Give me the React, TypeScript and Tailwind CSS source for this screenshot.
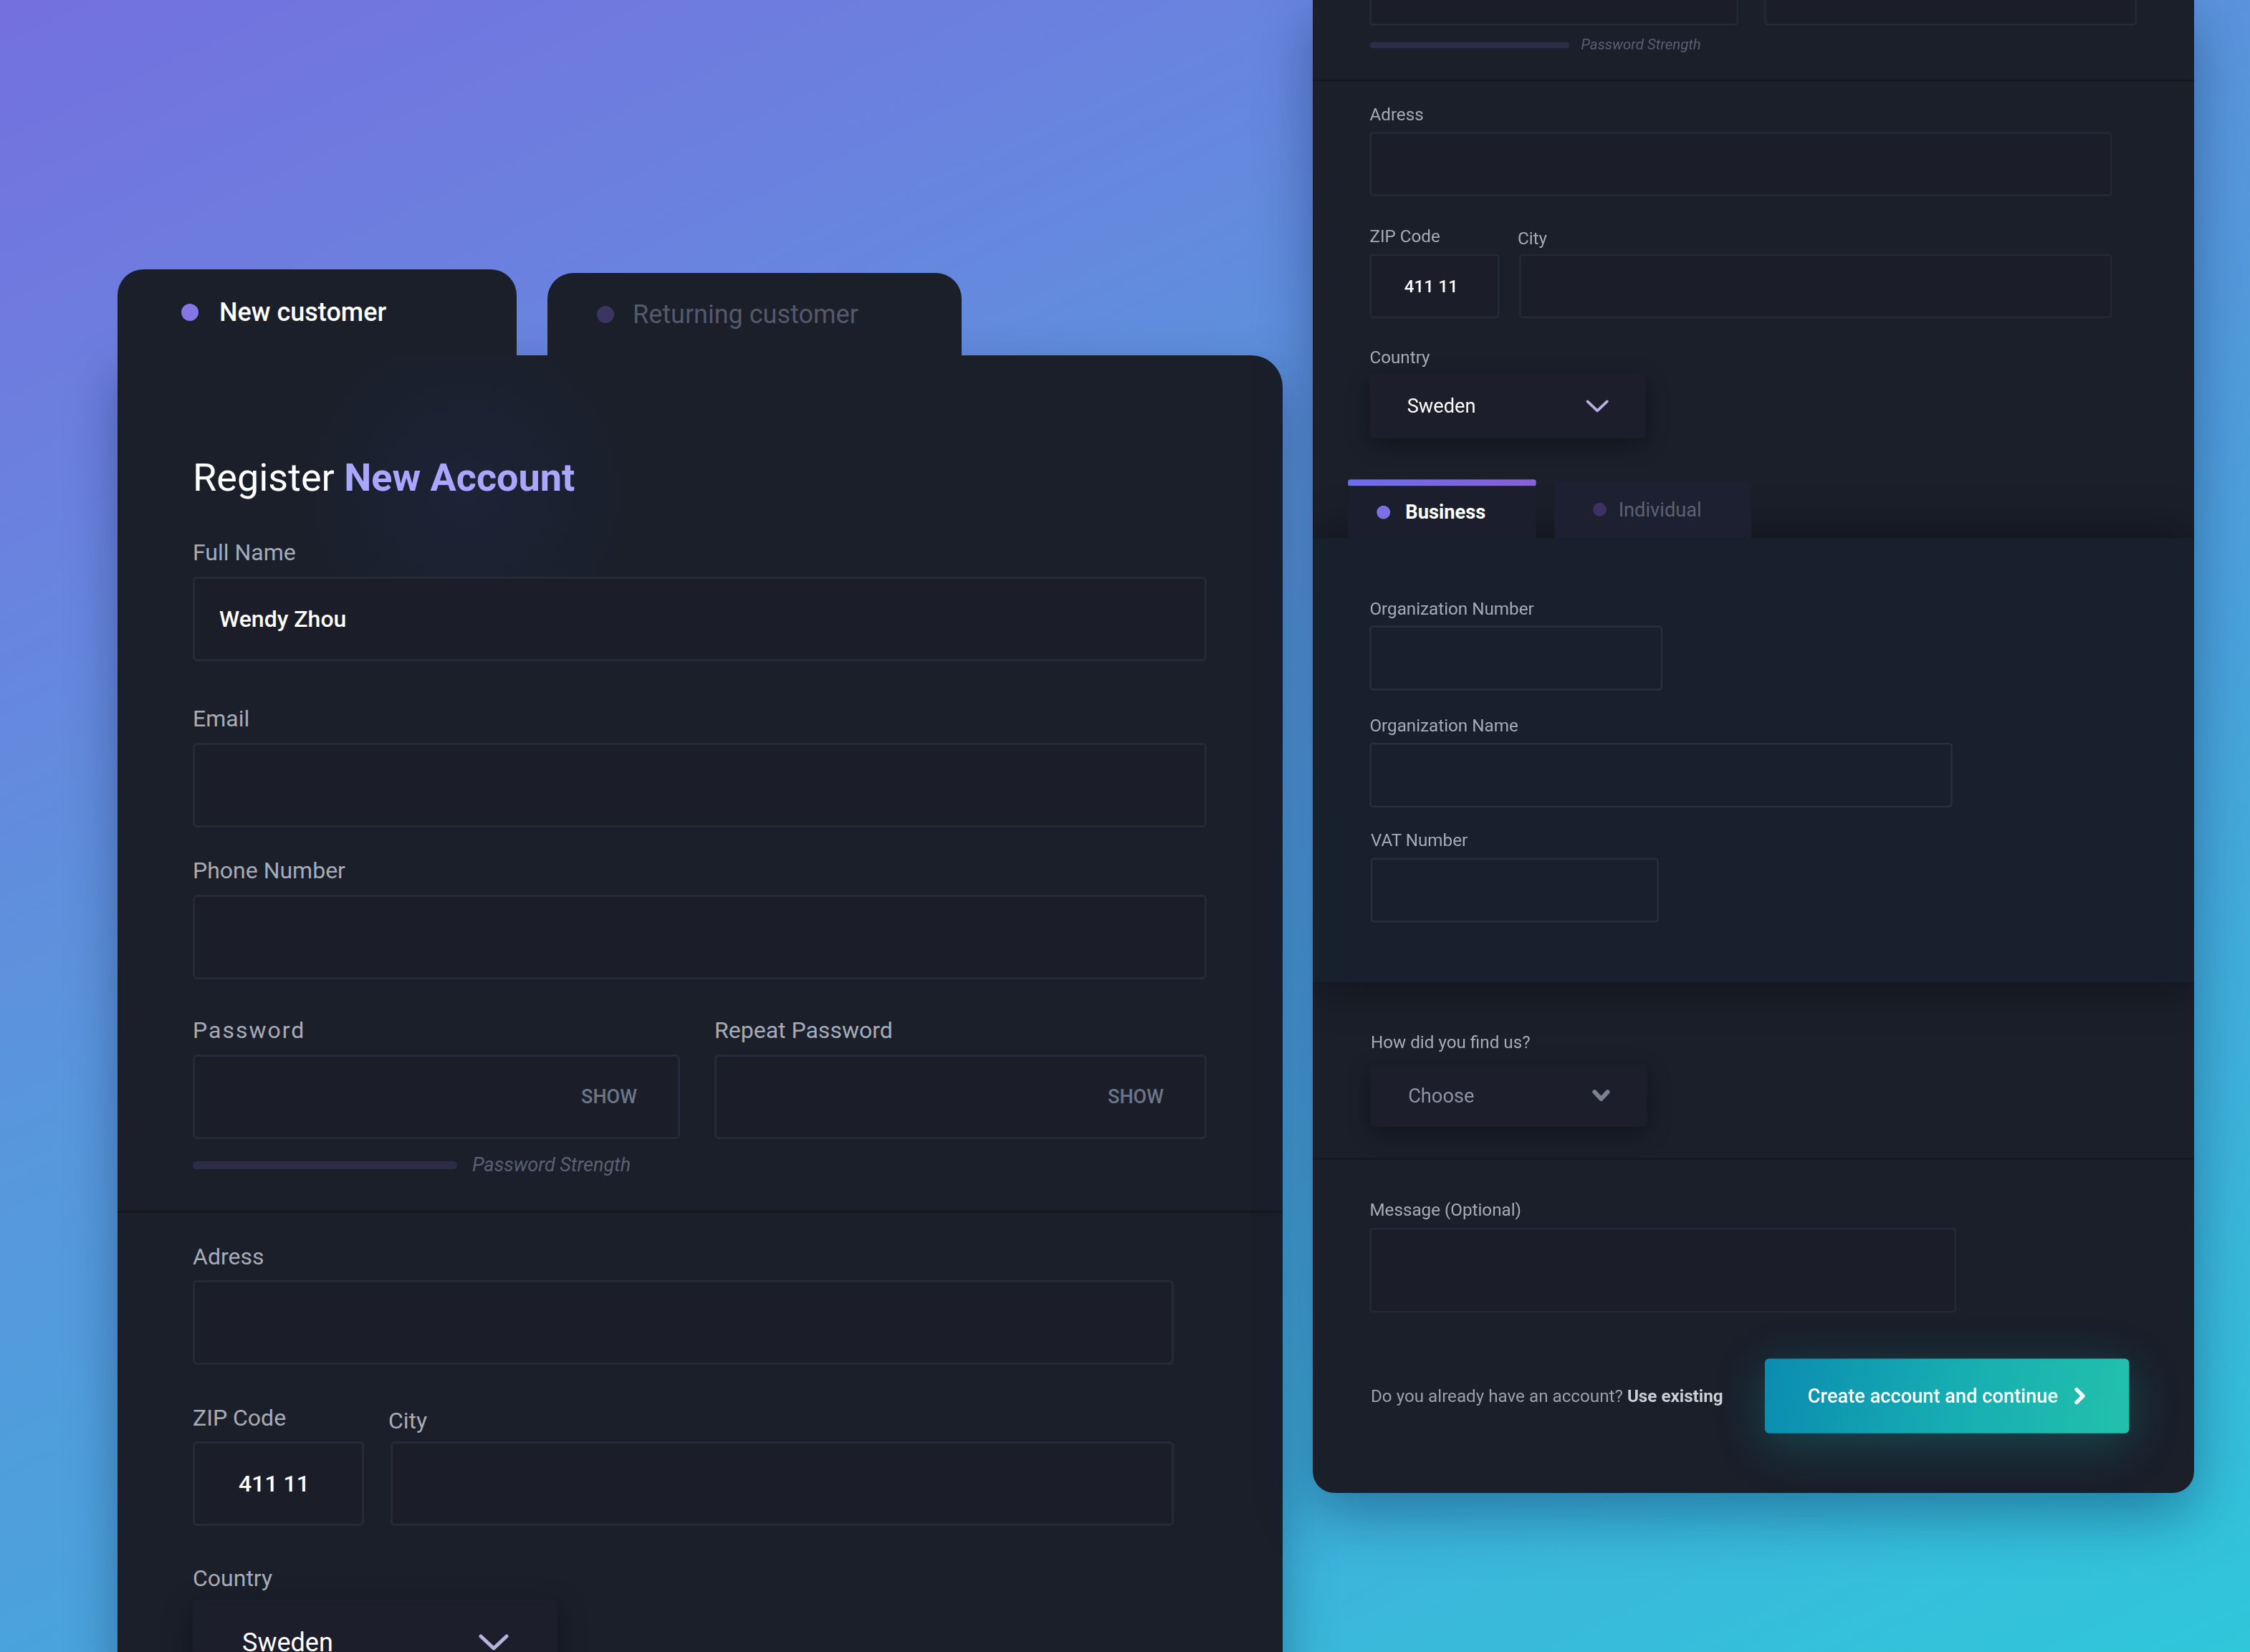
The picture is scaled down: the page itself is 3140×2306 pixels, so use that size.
const labelCls = 'block h-[32px] text-[32px] leading-[32px] text-[#a6acb7]'
const boxCls =
  'block h-[118px] w-full rounded-[6px] border-[3px] border-[#252a38] bg-[#1b1e29] px-[34px] text-[32px] font-medium text-white outline-none'
const panelBoxCls = 'block h-[119px] rounded-[6px] border-[3px] border-[#29303e] bg-transparent outline-none'

function ThinChevron() {
  return (
    <svg width="44" height="26" viewBox="0 0 44 26" fill="none">
      <polyline points="4,4 22,21 40,4" stroke="#b9b1de" strokeWidth="5" strokeLinecap="round" strokeLinejoin="round" />
    </svg>
  )
}

function BoldChevron() {
  return (
    <svg width="36" height="26" viewBox="0 0 36 26" fill="none">
      <polyline points="6,6 18,19 30,6" stroke="#7c8291" strokeWidth="8" strokeLinecap="round" strokeLinejoin="round" />
    </svg>
  )
}

function Select({ value, muted, className }: { value: string; muted?: boolean; className: string }) {
  return (
    <div
      className={`flex items-center justify-between rounded-[8px] bg-[#1c1f2b] pl-[69px] pr-[67px] shadow-[0_12px_40px_rgba(0,0,0,0.35)] ${className}`}
    >
      <span className={muted ? 'text-[36px] leading-none text-[#8e94a1]' : 'text-[36px] leading-none text-white'}>{value}</span>
      {muted ? <BoldChevron /> : <ThinChevron />}
    </div>
  )
}

function PasswordBox() {
  return (
    <div className="mt-[18px] flex h-[118px] items-center rounded-[6px] border-[3px] border-[#252a38] bg-[#1b1e29] pr-[57px]">
      <input type="password" readOnly className="h-full min-w-0 flex-1 bg-transparent outline-none" />
      <span className="text-[27px] font-medium leading-none text-[#6c7689]">SHOW</span>
    </div>
  )
}

function RegisterCard() {
  return (
    <div className="w-[1626px]">
      {/* customer type tabs */}
      <div className="flex items-end gap-[43px]">
        <div className="relative z-10 flex h-[120px] w-[557px] items-center gap-[29px] rounded-t-[36px] bg-[#1a1f2a] pl-[89px]">
          <span className="h-[24px] w-[24px] rounded-full bg-[#8476e6]" />
          <span className="text-[36px] font-medium leading-none text-white">New customer</span>
        </div>
        <div className="relative z-10 flex h-[115px] w-[578px] items-center gap-[26px] rounded-t-[36px] bg-[#1a1f2a] pl-[69px]">
          <span className="h-[24px] w-[24px] rounded-full bg-[#3c3463]" />
          <span className="text-[36px] leading-none text-[#555a6b]">Returning customer</span>
        </div>
      </div>

      <div className="rounded-tr-[44px] rounded-b-[40px] bg-[#1a1f2a] bg-[radial-gradient(circle_at_486px_190px,rgba(38,56,110,0.18)_0%,rgba(38,56,110,0)_240px)] shadow-[0_30px_70px_rgba(12,20,60,0.35)]">
        {/* contact details */}
        <section className="pl-[105px] pr-[106px] pt-[144px] pb-[51px]">
          <h1 className="text-[54px] font-normal leading-none text-white">
            Register <span className="font-bold text-[#a9a7ff]">New Account</span>
          </h1>
          <p className={`${labelCls} mt-[61px]`}>Full Name</p>
          <input className={`${boxCls} mt-[18px]`} defaultValue="Wendy Zhou" readOnly />
          <p className={`${labelCls} mt-[64px]`}>Email</p>
          <input className={`${boxCls} mt-[18px]`} readOnly />
          <p className={`${labelCls} mt-[44px]`}>Phone Number</p>
          <input className={`${boxCls} mt-[18px]`} readOnly />
          <div className="mt-[55px] flex gap-[48px]">
            <div className="w-[680px] shrink-0">
              <p className={`${labelCls} tracking-[2px]`}>Password</p>
              <PasswordBox />
            </div>
            <div className="flex-1">
              <p className={labelCls}>Repeat Password</p>
              <PasswordBox />
            </div>
          </div>
          <div className="mt-[23px] flex h-[26px] items-center gap-[21px]">
            <span className="h-[11px] w-[369px] rounded-full bg-[#2c2c47]" />
            <span className="text-[27px] italic leading-none text-[#5b6073]">Password Strength</span>
          </div>
        </section>
        <div className="h-[3px] bg-[#14171d]" />

        {/* address */}
        <section className="pl-[105px] pr-[152px] pt-[45px]">
          <p className={labelCls}>Adress</p>
          <input className={`${boxCls} mt-[17px]`} readOnly />
          <div className="mt-[58px] flex gap-[37px]">
            <div className="w-[239px] shrink-0">
              <p className={labelCls}>ZIP Code</p>
              <input className={`${boxCls} mt-[17px] pl-[61px]`} defaultValue="411 11" readOnly />
            </div>
            <div className="flex-1">
              <p className={`${labelCls} mt-[4px] -ml-[3px]`}>City</p>
              <input className={`${boxCls} mt-[13px]`} readOnly />
            </div>
          </div>
          <p className={`${labelCls} mt-[57px]`}>Country</p>
          <Select value="Sweden" className="mt-[14px] h-[119px] w-[509px]" />
        </section>

        {/* account type tabs */}
        <div className="relative z-10 mt-[76px] flex items-end gap-[34px] pl-[65px]">
          <div className="w-[347px]">
            <div className="h-[12px] rounded-[4px] bg-[linear-gradient(90deg,#6b6df2,#8a5fd8)]" />
            <div className="flex h-[96px] items-center gap-[28px] bg-[#1b1f2d] pl-[53px]">
              <span className="h-[25px] w-[25px] rounded-full bg-[#7d70e2]" />
              <span className="text-[36px] font-bold leading-none text-white">Business</span>
            </div>
          </div>
          <div className="flex h-[105px] w-[363px] items-center gap-[22px] bg-[#1c2030] pl-[71px]">
            <span className="h-[25px] w-[25px] rounded-full bg-[#3b3262]" />
            <span className="text-[36px] leading-none text-[#5d6173]">Individual</span>
          </div>
        </div>
        <div className="bg-[#19202d] pl-[105px] pt-[114px] pb-[111px] shadow-[0_0_80px_rgba(0,0,0,0.45)]">
          <p className={labelCls}>Organization Number</p>
          <input className={`${panelBoxCls} mt-[16px] w-[540px]`} readOnly />
          <p className={`${labelCls} mt-[49px]`}>Organization Name</p>
          <input className={`${panelBoxCls} mt-[16px] w-[1075px]`} readOnly />
          <p className={`${labelCls} mt-[45px] pl-[2px]`}>VAT Number</p>
          <input className={`${panelBoxCls} mt-[16px] ml-[2px] w-[531px]`} readOnly />
        </div>

        {/* referral */}
        <section className="pl-[107px] pt-[94px] pb-[57px]">
          <p className={labelCls}>How did you find us?</p>
          <Select value="Choose" muted className="mt-[25px] h-[116px] w-[510px]" />
        </section>
        <div className="h-[3px] bg-[#14171d]" />

        {/* message + submit */}
        <section className="pl-[105px] pr-[120px] pt-[77px] pb-[114px]">
          <p className={labelCls}>Message (Optional)</p>
          <textarea
            readOnly
            className="mt-[17px] block h-[156px] w-[1082px] resize-none rounded-[6px] border-[3px] border-[#252a38] bg-[#1b1e29] outline-none"
          />
          <div className="mt-[85px] flex items-center">
            <p className="pl-[2px] text-[32px] leading-none text-[#9aa0ac]">
              Do you already have an account? <span className="font-bold text-[#cbcfd6]">Use existing</span>
            </p>
            <button className="ml-auto flex h-[138px] w-[672px] items-center justify-center gap-[28px] rounded-[8px] bg-[linear-gradient(100deg,#0b8cb1_0%,#16acb2_50%,#22c1ac_100%)] text-[36px] font-medium leading-none text-white shadow-[0_20px_90px_rgba(20,170,170,0.3)]">
              Create account and continue
              <svg width="24" height="34" viewBox="0 0 24 34" fill="none">
                <polyline points="6,5 18,17 6,29" stroke="white" strokeWidth="7" strokeLinecap="round" strokeLinejoin="round" />
              </svg>
            </button>
          </div>
        </section>
      </div>
    </div>
  )
}

export default function App() {
  return (
    <div className="flex h-[2306px] w-[3140px] items-start overflow-hidden bg-[linear-gradient(155deg,#7470de_0%,#6a82df_20%,#5a95dc_40%,#4aa3dc_62%,#2fc7da_100%)] font-['Roboto',sans-serif]">
      <div className="ml-[164px] mt-[376px] shrink-0">
        <RegisterCard />
      </div>
      {/* same form, zoomed out and scrolled further down */}
      <div className="ml-[42px] h-[2084px] w-[1230px] shrink-0 overflow-hidden rounded-b-[30px] shadow-[0_30px_80px_rgba(10,30,80,0.4)]">
        <div className="-mt-[883px] w-[1626px] origin-top-left scale-[0.7565]">
          <RegisterCard />
        </div>
      </div>
    </div>
  )
}
